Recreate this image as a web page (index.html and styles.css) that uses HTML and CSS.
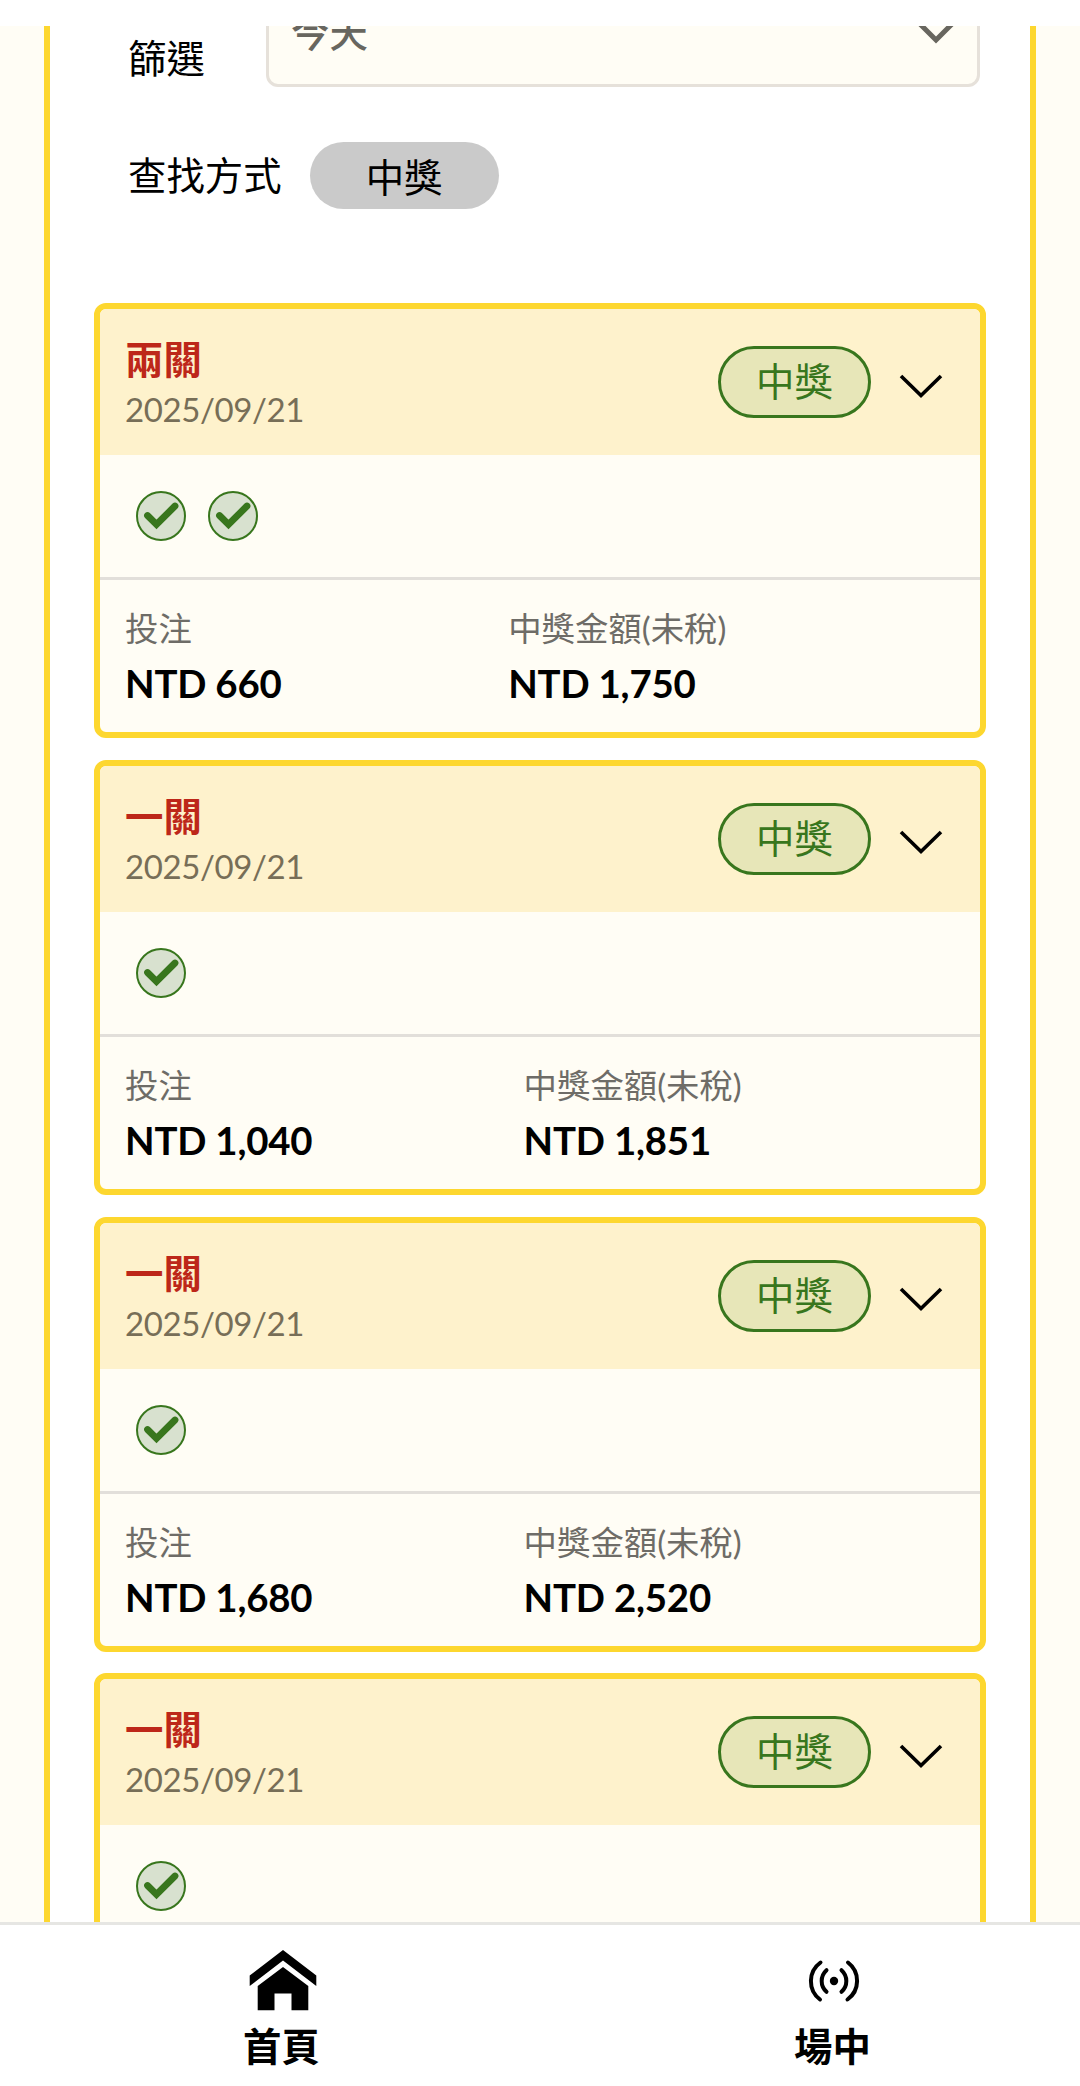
FILE: index.html
```html
<!DOCTYPE html>
<html lang="zh-Hant">
<head>
  <meta charset="UTF-8" />
  <title>投注紀錄</title>
  <meta name="viewport" content="width=device-width, initial-scale=1.0" />
  <link rel="stylesheet" href="styles.css">
</head>
<body>

  <!-- Shared icons -->
  <svg class="icon-defs" xmlns="http://www.w3.org/2000/svg">
    <symbol id="icon-check" viewBox="0 0 50 50">
      <circle cx="25" cy="25" r="24" fill="#d8e1cf" stroke="#38761d" stroke-width="2" />
      <path d="M11.500 24.500L20.500 33.500L39 15" fill="none" stroke="#38761d" stroke-width="6.800" stroke-linecap="round" />
    </symbol>
    <symbol id="icon-chevron" viewBox="0 0 44 26">
      <path d="M2 3L22 22.500L42 3" fill="none" stroke="#000" stroke-width="3.600" />
    </symbol>
  </svg>

  <div class="top-bar"></div>

  <main class="content">
    <div class="panel">

      <!-- Filters -->
      <div class="filter-row">
        <label class="filter-label">篩選</label>
        <div class="select">
          <span>今天</span>
          <svg class="select-arrow" viewBox="0 0 36 22">
            <path d="M3 3L18 18L33 3" fill="none" stroke="#68665f" stroke-width="5" stroke-linecap="round" />
          </svg>
        </div>
      </div>
      <div class="search-row">
        <span class="search-label">查找方式</span>
        <button class="search-pill">中獎</button>
      </div>

      <!-- Bet list -->
      <div class="bet-list">
        <div class="bet-card">
          <div class="bet-header">
            <div class="bet-title">
              <h2>兩關</h2>
              <p class="date">2025/09/21</p>
            </div>
            <div class="bet-status">
              <span class="badge">中獎</span>
              <svg class="chevron"><use href="#icon-chevron" /></svg>
            </div>
          </div>
          <div class="bet-results">
            <svg class="check"><use href="#icon-check" /></svg>
            <svg class="check"><use href="#icon-check" /></svg>
          </div>
          <div class="bet-amounts">
            <div class="amount">
              <p>投注</p>
              <strong>NTD 660</strong>
            </div>
            <div class="amount">
              <p>中獎金額(未稅)</p>
              <strong>NTD 1,750</strong>
            </div>
          </div>
        </div>

        <div class="bet-card">
          <div class="bet-header">
            <div class="bet-title">
              <h2>一關</h2>
              <p class="date">2025/09/21</p>
            </div>
            <div class="bet-status">
              <span class="badge">中獎</span>
              <svg class="chevron"><use href="#icon-chevron" /></svg>
            </div>
          </div>
          <div class="bet-results">
            <svg class="check"><use href="#icon-check" /></svg>
          </div>
          <div class="bet-amounts">
            <div class="amount">
              <p>投注</p>
              <strong>NTD 1,040</strong>
            </div>
            <div class="amount">
              <p>中獎金額(未稅)</p>
              <strong>NTD 1,851</strong>
            </div>
          </div>
        </div>

        <div class="bet-card">
          <div class="bet-header">
            <div class="bet-title">
              <h2>一關</h2>
              <p class="date">2025/09/21</p>
            </div>
            <div class="bet-status">
              <span class="badge">中獎</span>
              <svg class="chevron"><use href="#icon-chevron" /></svg>
            </div>
          </div>
          <div class="bet-results">
            <svg class="check"><use href="#icon-check" /></svg>
          </div>
          <div class="bet-amounts">
            <div class="amount">
              <p>投注</p>
              <strong>NTD 1,680</strong>
            </div>
            <div class="amount">
              <p>中獎金額(未稅)</p>
              <strong>NTD 2,520</strong>
            </div>
          </div>
        </div>

        <!-- Continues below the bottom nav -->
        <div class="bet-card">
          <div class="bet-header">
            <div class="bet-title">
              <h2>一關</h2>
              <p class="date">2025/09/21</p>
            </div>
            <div class="bet-status">
              <span class="badge">中獎</span>
              <svg class="chevron"><use href="#icon-chevron" /></svg>
            </div>
          </div>
          <div class="bet-results">
            <svg class="check"><use href="#icon-check" /></svg>
          </div>
        </div>
      </div>

    </div>
  </main>

  <!-- Bottom navigation -->
  <nav class="bottom-nav">
    <a class="nav-item">
      <svg class="nav-icon" viewBox="0 0 68 62">
        <path d="M34 0L67.300 25.500V36L34 10.500L.7 36V25.500Z" />
        <path d="M34 17L59.300 36V60.300H42.500V43.500H25.500V60.300H8.700V36Z" />
      </svg>
      <span>首頁</span>
    </a>
    <a class="nav-item">
      <svg class="nav-icon" viewBox="0 0 68 62">
        <circle cx="34" cy="31" r="4.200" />
        <path d="M26.500 20.200A14.500 14.500 0 0 0 26.500 41.800M41.500 20.200A14.500 14.500 0 0 1 41.500 41.800M20.500 12.500A23 23 0 0 0 20 49.500M48 12.500A23 23 0 0 1 47.500 49.500" fill="none" stroke="#000" stroke-width="4" stroke-linecap="round" />
      </svg>
      <span>場中</span>
    </a>
  </nav>

</body>
</html>
```
FILE: styles.css
```css
* {
  box-sizing: border-box;
  margin: 0;
  padding: 0;
}
body {
  display: flex;
  flex-direction: column;
  height: 100vh;
  overflow: hidden;
  font-family: Lato, 'Noto Sans CJK TC', sans-serif;
  font-size: 38.4px;
  background: #fffdf5;
  color: #000;
}
.icon-defs {
  display: none;
}

.top-bar {
  flex: none;
  height: 26px;
  background: #fff;
}

/* Scrolled content area */
.content {
  flex: 1;
  min-height: 0;
  overflow: hidden;
}
.panel {
  margin: 0 44px;
  padding: 0 44px;
  border-left: 6px solid #fdd72f;
  border-right: 6px solid #fdd72f;
  background: #fff;
}

/* Filters */
.filter-row {
  display: flex;
  justify-content: space-between;
  align-items: flex-end;
  margin-top: -51px;
  padding: 0 6px 0 34px;
}
.filter-label {
  padding-bottom: 1px;
  line-height: 56px;
}
.select {
  display: flex;
  justify-content: space-between;
  align-items: center;
  width: 714px;
  height: 112px;
  padding: 0 23px 0 22px;
  border: 3px solid #e6e1da;
  border-radius: 12px;
  background: #fffdf5;
  color: #68665f;
  font-weight: 500;
}
.select span {
  padding-bottom: 2px;
}
.select-arrow {
  width: 36px;
  height: 22px;
  margin-top: 4px;
}
.search-row {
  display: flex;
  align-items: center;
  gap: 28px;
  margin-top: 55px;
  padding-left: 34px;
}
.search-label {
  padding-bottom: 5px;
}
.search-pill {
  width: 189px;
  height: 67px;
  padding-bottom: 2px;
  border: none;
  border-radius: 34px;
  background: #cacaca;
  color: #000;
  font: inherit;
}

/* Bet cards */
.bet-list {
  display: flex;
  flex-direction: column;
  gap: 21.8px;
  margin-top: 94px;
}
.bet-card {
  height: 435px;
  border: 6px solid #fdd72f;
  border-radius: 12px;
  background: #fffdf5;
  overflow: hidden;
}
.bet-header {
  display: flex;
  justify-content: space-between;
  align-items: center;
  height: 146px;
  padding: 0 37px 0 25px;
  background: #fef2cc;
}
.bet-title {
  padding-top: 6px;
}
.bet-title h2 {
  color: #bd2719;
  font-size: 38.4px;
  font-weight: 700;
  line-height: 48px;
}
.date {
  color: #776e57;
  font-size: 33px;
  line-height: 52px;
  letter-spacing: -0.4px;
}
.bet-status {
  display: flex;
  align-items: center;
  gap: 28px;
}
.badge {
  width: 153px;
  height: 72px;
  border: 3px solid #38761d;
  border-radius: 36px;
  background: #e7e6b8;
  color: #38761d;
  line-height: 64px;
  text-align: center;
}
.chevron {
  width: 44px;
  height: 26px;
  margin-top: 7px;
}
.bet-results {
  display: flex;
  align-items: center;
  gap: 22px;
  height: 125px;
  padding-left: 36px;
  border-bottom: 3px solid #e2dfda;
}
.check {
  width: 50px;
  height: 50px;
}
.bet-amounts {
  display: flex;
  padding: 22px 27px 0 25px;
}
.amount {
  flex: 1 1 auto;
}
.amount p {
  color: #6e6c67;
  font-size: 33.4px;
  line-height: 52px;
}
.amount strong {
  display: block;
  font-size: 38.4px;
  font-weight: 700;
  line-height: 59px;
  letter-spacing: -0.2px;
}

/* Bottom navigation */
.bottom-nav {
  display: grid;
  grid-template-columns: 551px 551px;
  flex: none;
  height: 164px;
  padding-left: 6px;
  border-top: 3px solid #e6e6e3;
  background: #fff;
}
.nav-item {
  display: flex;
  flex-direction: column;
  align-items: center;
  padding-top: 25px;
  font-weight: 700;
  line-height: 68px;
}
.nav-icon {
  flex: none;
  width: 68px;
  height: 62px;
  margin-left: 3px;
}
```
